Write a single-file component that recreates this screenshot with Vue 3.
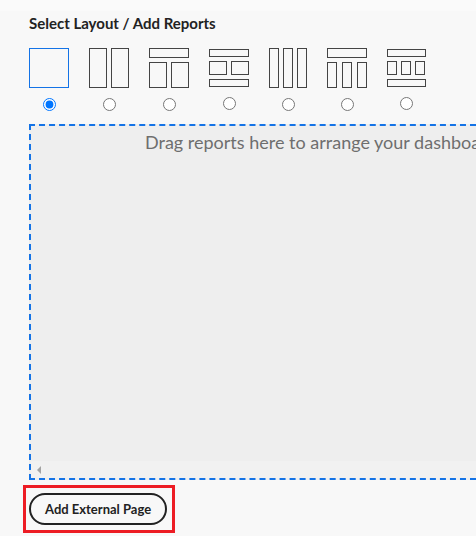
<script setup>
import { ref } from 'vue'

const selected = ref('single')

// Each layout is a set of panes: [x, y, width, height]
const layouts = [
  { id: 'single', label: 'One pane', width: 40, height: 40, panes: [[0, 0, 40, 40]] },
  { id: 'two-columns', label: 'Two columns', width: 40, height: 40, panes: [[0, 0, 18, 40], [22, 0, 18, 40]] },
  { id: 'top-two', label: 'Header and two columns', width: 40, height: 40, panes: [[0, 0, 40, 10], [0, 14, 18, 26], [22, 14, 18, 26]] },
  { id: 'top-two-bottom', label: 'Header, two columns and footer', width: 40, height: 39, panes: [[0, 1, 40, 8], [0, 13, 18, 14], [22, 13, 18, 14], [0, 31, 40, 8]] },
  { id: 'three-columns', label: 'Three columns', width: 38, height: 40, panes: [[0, 0, 10, 40], [14, 0, 10, 40], [28, 0, 10, 40]] },
  { id: 'top-three', label: 'Header and three columns', width: 40, height: 40, panes: [[0, 0, 40, 10], [0, 14, 10, 26], [15, 14, 10, 26], [30, 14, 10, 26]] },
  { id: 'top-three-bottom', label: 'Header, three columns and footer', width: 39, height: 39, panes: [[0, 1, 39, 8], [0, 13, 10, 14], [14, 13, 10, 14], [28, 13, 10, 14], [0, 31, 39, 8]] },
]
</script>

<template>
  <main class="page">
    <h2 id="layout-title" class="title">Select Layout / Add Reports</h2>

    <div class="layouts" role="radiogroup" aria-labelledby="layout-title">
      <label
        v-for="layout in layouts"
        :key="layout.id"
        class="layout"
        :class="{ active: selected === layout.id }"
      >
        <svg :width="layout.width" :height="layout.height" aria-hidden="true">
          <rect
            v-for="([x, y, w, h], i) in layout.panes"
            :key="i"
            :x="x + 0.5"
            :y="y + 0.5"
            :width="w - 1"
            :height="h - 1"
          />
        </svg>
        <input v-model="selected" type="radio" name="layout" :value="layout.id" :aria-label="layout.label" />
      </label>
    </div>

    <section class="dropzone">
      <p class="hint">Drag reports here to arrange your dashboard</p>
      <div class="scrollbar">
        <svg width="4" height="8" viewBox="0 0 4 8" aria-hidden="true">
          <path d="M4 0v8L0 4z" />
        </svg>
      </div>
    </section>

    <div class="highlight">
      <button type="button" class="add-page">Add External Page</button>
    </div>
  </main>
</template>

<style>
body {
  margin: 0;
  background: #f8f8f8;
}
</style>

<style scoped>
.page {
  padding-left: 29px;
  border-top: 11px solid #fafafa;
  overflow: hidden;
  font-family: Lato, "Open Sans", sans-serif;
  color: #222;
}

.title {
  margin: 2px 0 15px;
  font-size: 15px;
  line-height: 20px;
  font-weight: 700;
  white-space: nowrap;
}

.layouts {
  display: flex;
  align-items: flex-start;
  gap: 20px;
  height: 76px;
}

.layout {
  display: flex;
  flex-direction: column;
  align-items: center;
  gap: 10px;
}

.layout svg {
  display: block;
  fill: none;
  stroke: #444;
}

.layout.active svg {
  stroke: #1473e6;
}

.layout input {
  width: 13px;
  height: 13px;
  margin: 0;
}

.dropzone {
  display: flex;
  flex-direction: column;
  justify-content: space-between;
  box-sizing: border-box;
  height: 356px;
  border: 2px dashed #1473e6;
  border-right: 0;
  background: #eee;
  overflow: hidden;
}

.hint {
  margin: 0;
  padding: 4px 0 0 114px;
  font-size: 18px;
  line-height: 24px;
  color: #6e6e6e;
  white-space: nowrap;
}

.scrollbar {
  display: flex;
  align-items: center;
  height: 17px;
  padding-left: 6px;
  background: #f1f1f1;
}

.scrollbar svg {
  fill: #a3a3a3;
}

.highlight {
  display: inline-block;
  margin: 5px 0 0 -6px;
  padding: 5px 5px 5px 3px;
  border: 3px solid #ed1c24;
}

.add-page {
  display: block;
  height: 32px;
  padding: 0 14px;
  border: 2px solid #222;
  border-radius: 16px;
  background: transparent;
  color: #222;
  font-family: inherit;
  font-size: 13px;
  font-weight: 700;
  line-height: 20px;
  white-space: nowrap;
}
</style>
